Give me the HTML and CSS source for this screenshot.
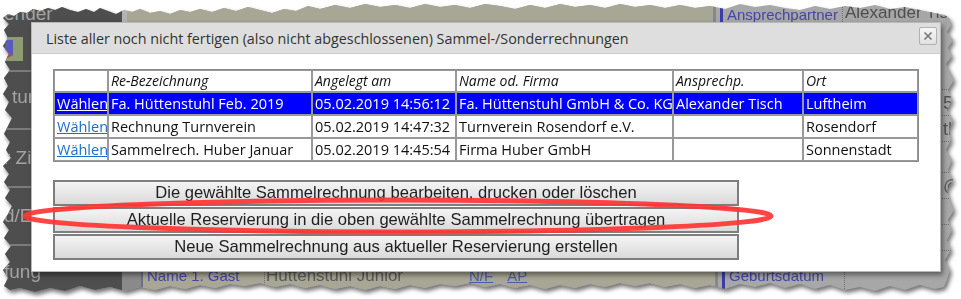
FILE: index.html
```html
<!DOCTYPE html>
<html lang="de">
<head>
    <meta charset="UTF-8">
    <title>Sammelrechnungen</title>
    <link rel="stylesheet" href="styles.css">
</head>
<body>
    <div class="shot">
        <div class="paper-shadow">
            <div class="paper">
                <aside class="side">
                    <div class="side-item first">
                        <span class="side-label">ender</span>
                        <svg class="app-icon" width="18" height="24" viewBox="0 0 18 24">
                            <rect x="0" y="0" width="18" height="24" fill="#8e9c72"/>
                            <polygon points="0,3 8,3 8,18 0,22" fill="#5a5ab8"/>
                            <polygon points="0,15 8,18 0,22" fill="#b84a4a"/>
                        </svg>
                    </div>
                    <div class="side-item"><span class="side-label indent">tur</span></div>
                    <div class="side-item"><span class="side-label">r Zi</span></div>
                    <div class="side-item"><span class="side-label">d/E</span></div>
                    <div class="side-item last"><span class="side-label">fung</span></div>
                </aside>
                <div class="form">
                    <div class="form-row top">
                        <div class="sep-light"></div>
                        <div class="beige wide"></div>
                        <div class="bar-gray"></div>
                        <div class="bar-blue"></div>
                        <div class="field-label">Ansprechpartner</div>
                        <div class="field-value big">Alexander Tisch</div>
                    </div>
                    <div class="form-row mid">
                        <div class="sep-light"></div>
                        <div class="beige wide"></div>
                        <div class="bar-gray"></div>
                        <div class="bar-blue"></div>
                        <div class="field-label"></div>
                        <div class="field-value lines">
                            <div class="line tall"></div>
                            <div class="line">5</div>
                            <div class="line">th</div>
                            <div class="line wide-gap"></div>
                            <div class="line">@</div>
                            <div class="line"></div>
                            <div class="line"></div>
                        </div>
                    </div>
                    <div class="form-row bottom">
                        <div class="sep-dark"></div>
                        <div class="beige wide guest">
                            <span class="guest-label">Name 1. Gast</span>
                            <span class="guest-name">Hüttenstuhl Junior</span>
                            <a class="small-link">N/F</a>
                            <a class="small-link">AP</a>
                        </div>
                        <div class="bar-gray"></div>
                        <div class="bar-blue"></div>
                        <div class="field-label">Geburtsdatum</div>
                        <div class="field-value"></div>
                    </div>
                </div>
            </div>
        </div>

        <div class="dialog">
            <div class="dialog-title">
                <span>Liste aller noch nicht fertigen (also nicht abgeschlossenen) Sammel-/Sonderrechnungen</span>
                <button class="close-btn" title="Schließen">
                    <svg width="10" height="10" viewBox="0 0 10 10">
                        <path d="M1.5 1.5 L8.5 8.5 M8.5 1.5 L1.5 8.5" stroke="#7a7a7a" stroke-width="1.7"/>
                    </svg>
                </button>
            </div>
            <div class="dialog-body">
                <table class="invoice-table">
                    <colgroup>
                        <col style="width:54px">
                        <col style="width:204px">
                        <col style="width:144px">
                        <col style="width:217px">
                        <col style="width:130px">
                        <col>
                    </colgroup>
                    <tr class="head">
                        <td></td>
                        <td>Re-Bezeichnung</td>
                        <td>Angelegt am</td>
                        <td>Name od. Firma</td>
                        <td>Ansprechp.</td>
                        <td>Ort</td>
                    </tr>
                    <tr class="selected">
                        <td><a class="pick">Wählen</a></td>
                        <td>Fa. Hüttenstuhl Feb. 2019</td>
                        <td>05.02.2019 14:56:12</td>
                        <td>Fa. Hüttenstuhl GmbH &amp; Co. KG</td>
                        <td>Alexander Tisch</td>
                        <td>Luftheim</td>
                    </tr>
                    <tr>
                        <td><a class="pick">Wählen</a></td>
                        <td>Rechnung Turnverein</td>
                        <td>05.02.2019 14:47:32</td>
                        <td>Turnverein Rosendorf e.V.</td>
                        <td></td>
                        <td>Rosendorf</td>
                    </tr>
                    <tr>
                        <td><a class="pick">Wählen</a></td>
                        <td>Sammelrech. Huber Januar</td>
                        <td>05.02.2019 14:45:54</td>
                        <td>Firma Huber GmbH</td>
                        <td></td>
                        <td>Sonnenstadt</td>
                    </tr>
                </table>

                <div class="actions">
                    <button class="action-btn">Die gewählte Sammelrechnung bearbeiten, drucken oder löschen</button>
                    <button class="action-btn">Aktuelle Reservierung in die oben gewählte Sammelrechnung übertragen</button>
                    <button class="action-btn">Neue Sammelrechnung aus aktueller Reservierung erstellen</button>
                </div>
            </div>
        </div>

        <!-- rote Markierung -->
        <svg class="mark" width="961" height="299" viewBox="0 0 961 299">
            <ellipse cx="398" cy="216" rx="373" ry="16" fill="none" stroke="#ff3434" stroke-opacity="0.92" stroke-width="5"/>
        </svg>
    </div>
</body>
</html>
```

FILE: styles.css
```css
body {
    margin: 0;
    background-color: #fff;
    font-family: "Liberation Sans", Arial, sans-serif;
}

.shot {
    position: relative;
    width: 961px;
    height: 299px;
    overflow: hidden;
}

/* ausgerissener Screenshot im Hintergrund */
.paper-shadow {
    filter: drop-shadow(2px 3px 2px rgba(0, 0, 0, 0.55));
}

.paper {
    display: flex;
    width: 961px;
    height: 299px;
    background: #a7a7a7;
    clip-path: polygon(3px 18px, 8px 14px, 14px 16px, 20px 12px, 27px 13px, 33px 9px, 40px 11px, 48px 8px, 55px 10px, 62px 7px, 70px 10px, 78px 12px, 86px 9px, 94px 12px, 100px 8px, 108px 11px, 116px 14px, 124px 10px, 132px 12px, 140px 9px, 150px 13px, 160px 11px, 170px 14px, 180px 10px, 190px 12px, 200px 9px, 212px 12px, 224px 8px, 236px 11px, 248px 7px, 260px 10px, 272px 13px, 284px 9px, 296px 11px, 308px 6px, 320px 9px, 335px 5px, 350px 8px, 365px 4px, 380px 7px, 395px 5px, 410px 8px, 425px 4px, 440px 7px, 455px 5px, 470px 8px, 485px 4px, 500px 6px, 515px 9px, 530px 5px, 545px 8px, 560px 4px, 575px 7px, 590px 5px, 605px 8px, 620px 4px, 635px 7px, 650px 5px, 665px 8px, 680px 5px, 695px 8px, 710px 6px, 725px 9px, 740px 4px, 755px 7px, 770px 5px, 785px 8px, 800px 10px, 815px 6px, 830px 9px, 845px 6px, 860px 8px, 875px 5px, 890px 9px, 905px 7px, 920px 10px, 935px 13px, 945px 15px, 950px 19px,
        951px 25px, 947px 32px, 953px 40px, 948px 48px, 952px 56px, 946px 64px, 950px 72px, 954px 80px, 948px 90px, 952px 100px, 947px 110px, 953px 120px, 949px 130px, 951px 140px, 946px 150px, 952px 160px, 948px 170px, 953px 180px, 947px 190px, 950px 200px, 954px 210px, 948px 220px, 952px 230px, 947px 240px, 951px 250px, 945px 260px, 950px 270px, 947px 280px, 944px 287px,
        935px 289px, 920px 285px, 905px 290px, 890px 286px, 875px 291px, 860px 287px, 845px 290px, 830px 285px, 815px 289px, 800px 284px, 785px 288px, 770px 283px, 755px 287px, 740px 284px, 725px 289px, 710px 285px, 695px 288px, 680px 284px, 665px 287px, 650px 283px, 635px 286px, 620px 283px, 605px 287px, 590px 284px, 575px 288px, 560px 285px, 545px 289px, 530px 285px, 515px 288px, 500px 284px, 485px 287px, 470px 283px, 455px 286px, 440px 284px, 425px 288px, 410px 285px, 395px 289px, 380px 286px, 365px 290px, 350px 286px, 335px 289px, 320px 285px, 305px 288px, 290px 284px, 275px 287px, 260px 283px, 245px 286px, 230px 284px, 215px 288px, 200px 285px, 185px 289px, 170px 286px, 155px 290px, 140px 287px, 125px 291px, 110px 287px, 95px 290px, 80px 286px, 65px 291px, 50px 288px, 35px 292px, 20px 288px, 10px 290px, 4px 286px,
        8px 278px, 3px 270px, 10px 262px, 5px 254px, 11px 246px, 4px 238px, 9px 230px, 3px 222px, 8px 214px, 12px 206px, 5px 198px, 10px 190px, 4px 182px, 9px 174px, 3px 166px, 11px 158px, 6px 150px, 10px 142px, 4px 134px, 8px 126px, 12px 118px, 5px 110px, 9px 102px, 3px 94px, 8px 86px, 4px 78px, 10px 70px, 5px 62px, 9px 54px, 3px 46px, 8px 38px, 4px 30px, 9px 24px);
}

.side {
    width: 122px;
    display: flex;
    flex-direction: column;
    background-color: #4e4e4e;
}

.side-item {
    height: 58px;
    display: flex;
    flex-direction: column;
    justify-content: center;
    padding-left: 4px;
    border-top: 2px solid #7b7b7b;
    box-sizing: border-box;
}

.side-item.first {
    height: 70px;
    border-top: none;
    justify-content: flex-start;
    padding-top: 4px;
}

.side-item.last {
    flex: 1;
    justify-content: flex-start;
    padding-top: 16px;
}

.side-label {
    color: #a3a3a3;
    font-size: 19px;
    line-height: 20px;
}

.side-label.indent {
    padding-left: 8px;
    margin-top: -6px;
}

.app-icon {
    display: block;
    margin-top: 13px;
    margin-left: 1px;
}

.form {
    flex: 1;
    display: flex;
    flex-direction: column;
}

.form-row {
    display: flex;
}

.form-row.top {
    height: 26px;
}

.form-row.mid {
    flex: 1;
}

.form-row.bottom {
    height: 36px;
}

.sep-light {
    width: 5px;
    background-color: #b3b3b3;
}

.sep-dark {
    width: 19px;
    background-color: #8a8a8a;
    border-right: 2px solid #6c6c8c;
}

.beige {
    background-color: #a8a694;
}

.beige.wide {
    flex: 1;
}

.bar-gray {
    width: 3px;
    background-color: #888;
}

.bar-blue {
    width: 3px;
    margin-left: 4px;
    margin-right: 2px;
    background-color: #3c3ca6;
}

.field-label {
    width: 115px;
    padding-left: 2px;
    display: flex;
    align-items: flex-end;
    color: #4545a8;
    font-size: 15px;
    line-height: 18px;
    border-right: 1px dotted #6e6e6e;
}

.top .field-label {
    padding-bottom: 2px;
}

.bottom .field-label {
    align-items: flex-start;
    padding-top: 4px;
}

.field-value {
    width: 116px;
    color: #4e4e4e;
}

.field-value.big {
    font-size: 17px;
    line-height: 22px;
    padding: 2px 0 0 2px;
    white-space: nowrap;
    overflow: hidden;
}

.field-value.lines {
    display: flex;
    flex-direction: column;
}

.line {
    height: 26px;
    border-bottom: 1px dotted #6e6e6e;
    padding-left: 98px;
    font-size: 18px;
    color: #555;
    box-sizing: border-box;
    line-height: 26px;
}

.line.tall {
    height: 64px;
}

.line.wide-gap {
    height: 31px;
}

.guest {
    display: flex;
    align-items: flex-start;
    padding-top: 4px;
    padding-left: 4px;
}

.guest-label {
    width: 117px;
    color: #4545a8;
    font-size: 15px;
    line-height: 18px;
}

.guest-name {
    width: 199px;
    padding-left: 1px;
    color: #5a5a5a;
    font-size: 17px;
    line-height: 18px;
    border-left: 1px dotted #6e6e6e;
}

.small-link {
    color: #4d5ea6;
    font-size: 15px;
    line-height: 18px;
    text-decoration: underline;
    margin-left: 4px;
    margin-right: 10px;
}

/* Dialog */
.dialog {
    position: absolute;
    left: 31px;
    top: 22px;
    width: 910px;
    height: 250px;
    box-sizing: border-box;
    background-color: #fff;
    border: 1px solid #b8b8b8;
    box-shadow: 2px 3px 5px rgba(0, 0, 0, 0.45);
}

.dialog-title {
    height: 30px;
    display: flex;
    align-items: center;
    justify-content: space-between;
    padding: 0 3px 0 14px;
    background-color: #dedede;
    border-bottom: 1px solid #cdcdcd;
    font-family: "Open Sans", sans-serif;
    font-size: 14.3px;
    color: #333;
}

.close-btn {
    width: 18px;
    height: 18px;
    padding: 0;
    display: flex;
    align-items: center;
    justify-content: center;
    border: 1px solid #b2b2b2;
    border-radius: 2px;
    background: linear-gradient(to bottom, #f6f6f6, #e2e2e2);
    margin-top: -4px;
}

.dialog-body {
    padding: 15px 20px 0 21px;
}

.invoice-table {
    width: 866px;
    table-layout: fixed;
    border-collapse: separate;
    border-spacing: 0;
    border: 1px solid #8a8a8a;
    font-family: "Open Sans", sans-serif;
    font-size: 14.5px;
    color: #111;
}

.invoice-table td {
    height: 21px;
    padding: 0 2px;
    border: 1px solid #999;
    white-space: nowrap;
    overflow: hidden;
    line-height: 21px;
}

.invoice-table tr.head td {
    height: 20px;
    font-style: italic;
    font-size: 14px;
    line-height: 20px;
}

.invoice-table tr.selected td {
    background-color: #0000ff;
    color: #fff;
}

.pick {
    color: #1c6fcc;
    text-decoration: underline;
    cursor: pointer;
}

.selected .pick {
    color: #fff;
}

.actions {
    width: 686px;
    margin-top: 18px;
    display: flex;
    flex-direction: column;
    gap: 1px;
}

.action-btn {
    height: 26px;
    padding: 0;
    border: 2px solid #7e7e7e;
    background: linear-gradient(to bottom, #f4f4f4, #dadada);
    font-family: "Liberation Sans", Arial, sans-serif;
    font-size: 16.6px;
    color: #1e1e1e;
    cursor: pointer;
}

.mark {
    position: absolute;
    left: 0;
    top: 0;
    pointer-events: none;
}
```
